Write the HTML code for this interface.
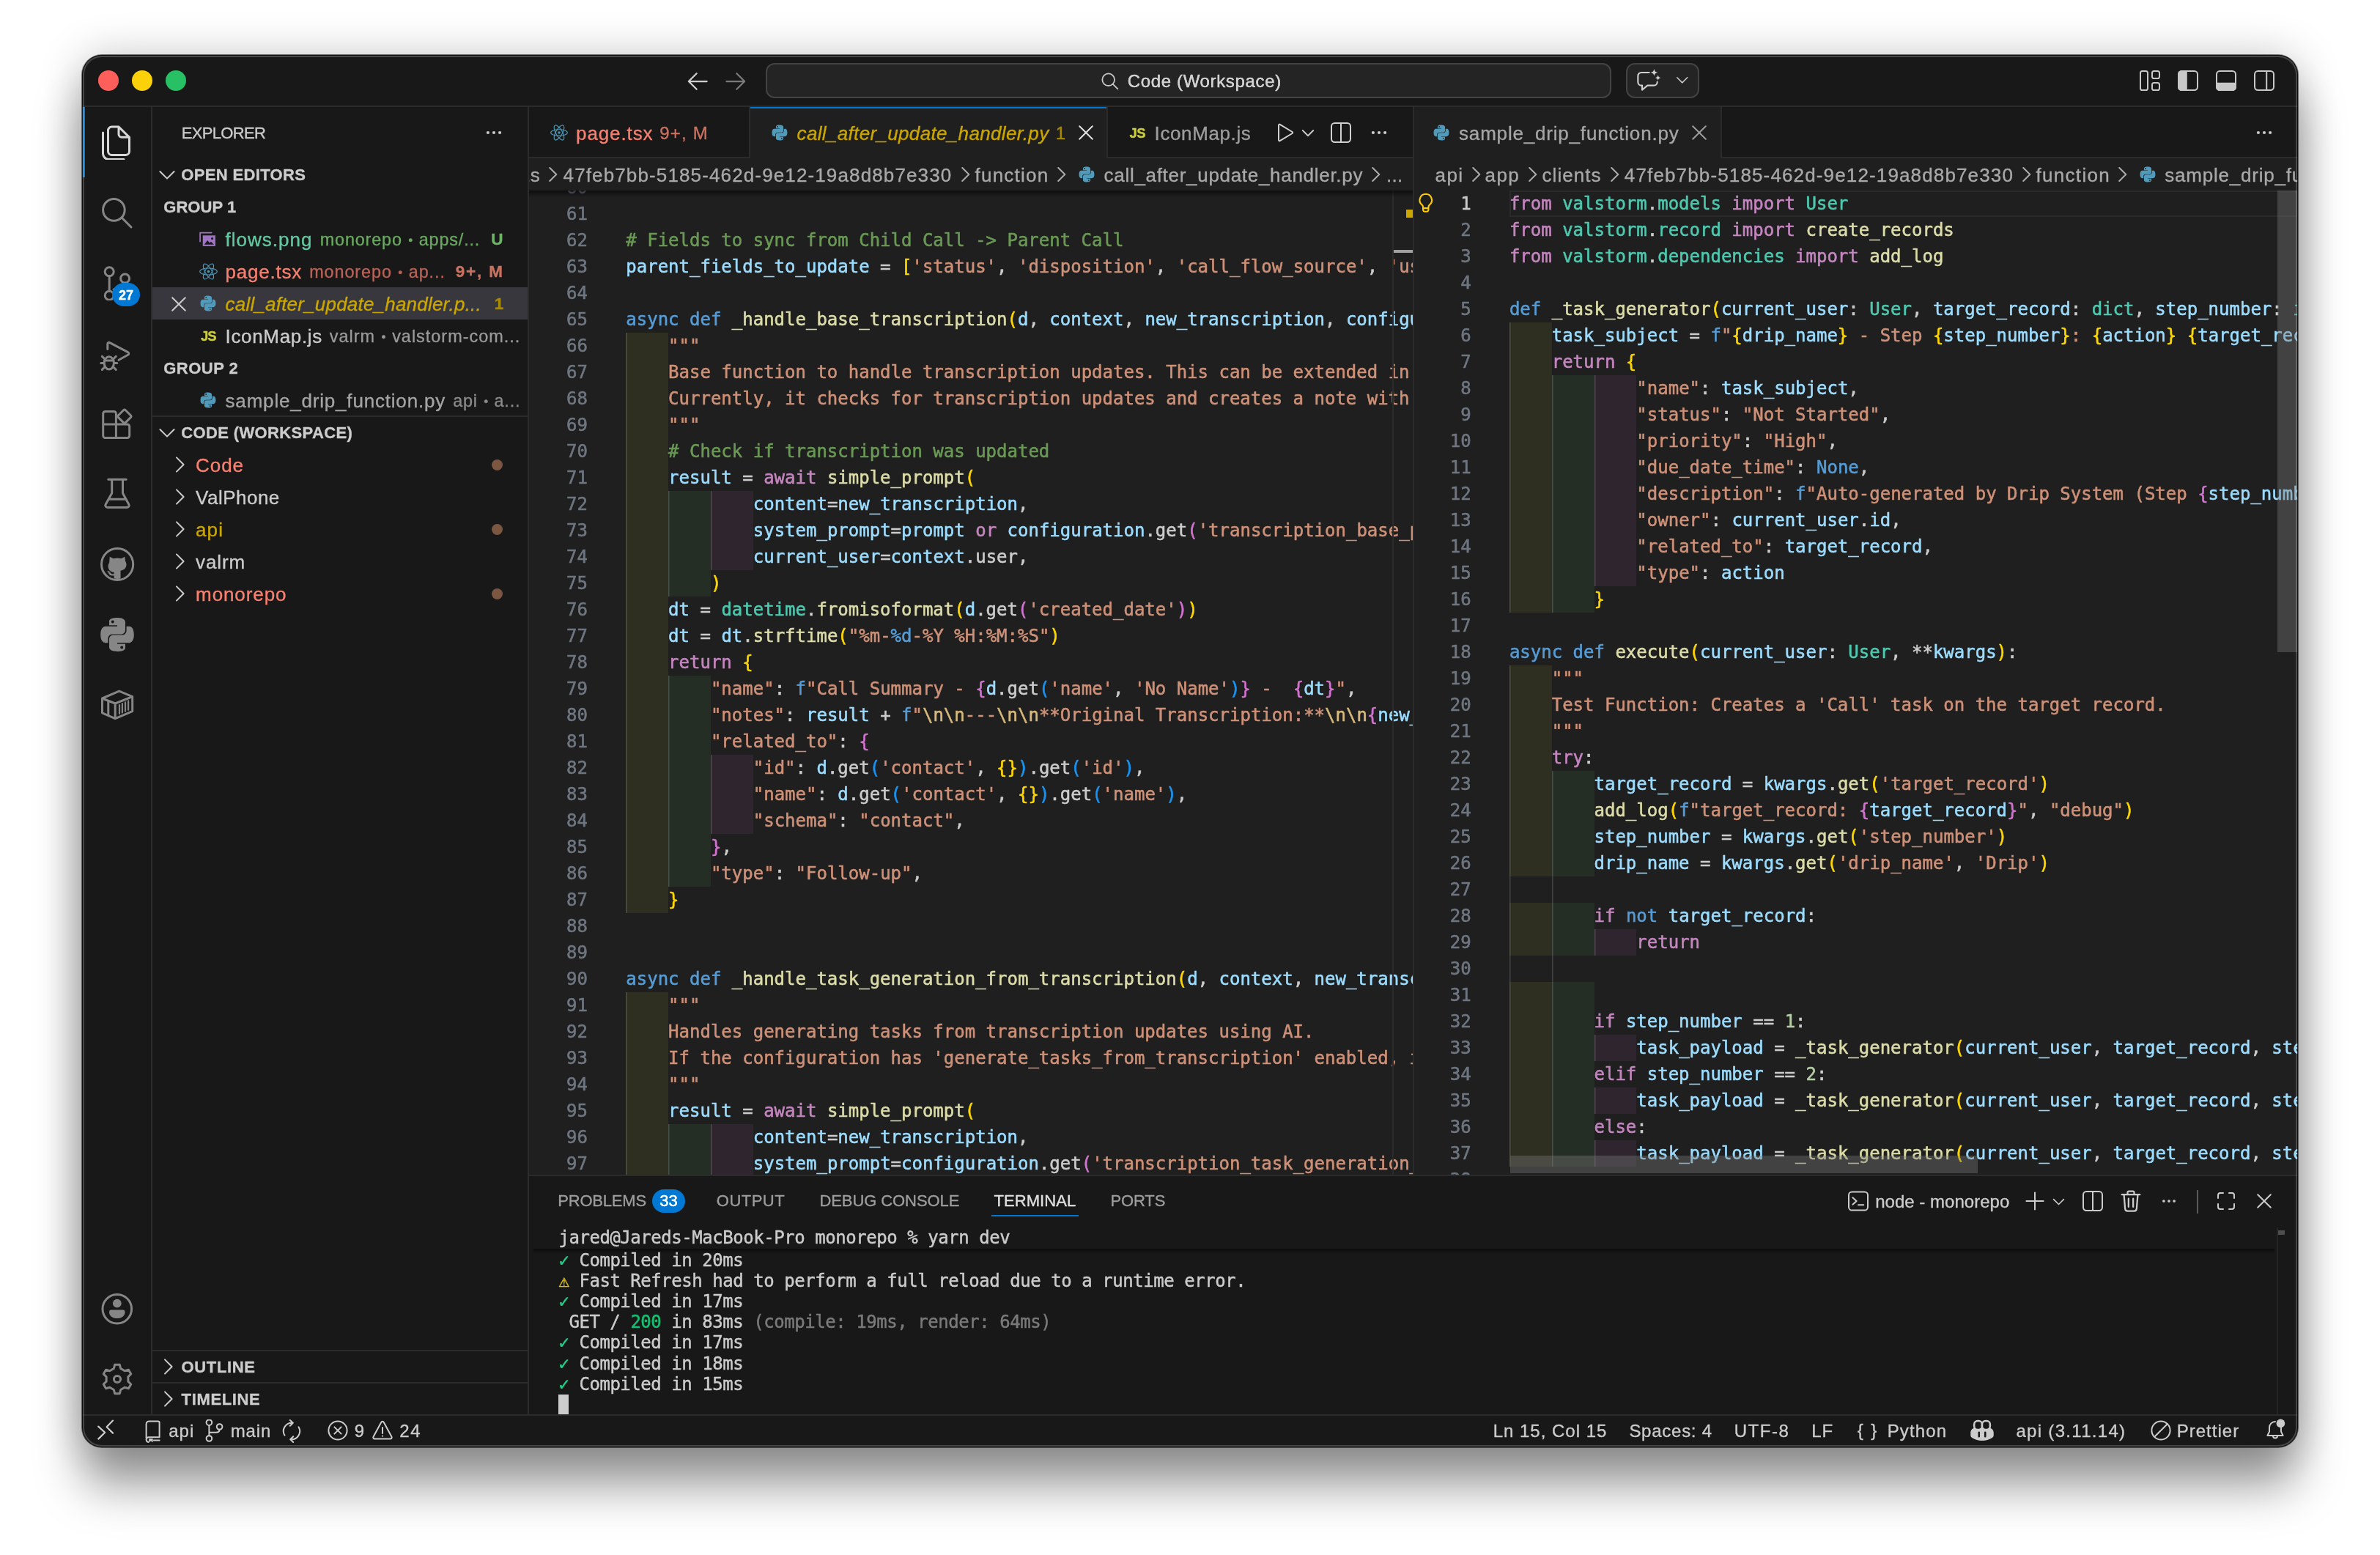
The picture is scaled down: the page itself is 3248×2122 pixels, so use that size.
<!DOCTYPE html>
<html lang="en"><head><meta charset="utf-8"><title>Code (Workspace)</title>
<style>
html,body{margin:0;padding:0}
body{width:3248px;height:2122px;background:#fff;overflow:hidden;position:relative;font-family:"Liberation Sans",sans-serif}
.win{will-change:transform;position:absolute;left:112px;top:75px;width:3024px;height:1900px;border-radius:27px;background:#181818;overflow:hidden;box-shadow:0 0 0 1px rgba(0,0,0,.5),0 2px 60px rgba(0,0,0,.24),0 54px 64px rgba(0,0,0,.38)}
.rim{position:absolute;left:112px;top:75px;width:3024px;height:1900px;border-radius:27px;box-shadow:inset 0 0 0 1px rgba(0,0,0,.8),inset 0 0 0 3px rgba(255,255,255,.2);pointer-events:none}
.a{position:absolute;display:block}
.t{white-space:pre;-webkit-text-stroke:.35px;font-family:"Liberation Sans",sans-serif}
.m{font-family:"DejaVu Sans Mono","Liberation Mono",monospace}
.cl{-webkit-text-stroke:.55px;position:absolute;left:0;height:36px;line-height:36px;font-size:24px;white-space:pre;font-family:"DejaVu Sans Mono","Liberation Mono",monospace;color:#ccc}
.ln{-webkit-text-stroke:.55px;position:absolute;height:36px;line-height:36px;font-size:24px;text-align:right;width:80px;font-family:"DejaVu Sans Mono","Liberation Mono",monospace;color:#6e7681}
.k{color:#569cd6}.c{color:#c586c0}.f{color:#dcdcaa}.v{color:#9cdcfe}.s{color:#ce9178}.cm{color:#6a9955}.ty{color:#4ec9b0}.n{color:#b5cea8}.p{color:#ccc}.b1{color:#ffd700}.b2{color:#d273d0}.b3{color:#1795f6}.e{color:#d7ba7d}
.tl{-webkit-text-stroke:.45px;position:absolute;left:0;height:28px;line-height:28px;font-size:24px;letter-spacing:-.453px;white-space:pre;font-family:"DejaVu Sans Mono","Liberation Mono",monospace;color:#ccc}
.i{display:inline-block;width:57.8125px;height:36px;vertical-align:top;font-style:normal;box-shadow:inset 1.5px 0 0 rgba(255,255,255,.16)}
.i1{background:rgba(255,255,64,.07)}.i2{background:rgba(127,255,127,.07)}.i3{background:rgba(255,127,255,.07)}.i4{background:rgba(79,236,236,.07)}
.bu{font-size:.74em;vertical-align:.13em;margin:0 .06em;letter-spacing:0}
</style></head>
<body>
<div class="win">
<div class="a" style="left:0px;top:69px;width:3024px;height:2px;background:#2b2b2b;"></div>
<div class="a" style="left:22px;top:21px;width:28px;height:28px;background:#ff5f5a;border-radius:50%;"></div>
<div class="a" style="left:68px;top:21px;width:28px;height:28px;background:#fdd10a;border-radius:50%;"></div>
<div class="a" style="left:114px;top:21px;width:28px;height:28px;background:#27c064;border-radius:50%;"></div>
<svg class="a" style="left:821.5px;top:17.5px;width:36px;height:36px;color:#d0d0d0;" viewBox="0 0 16 16" fill="none" stroke="currentColor" stroke-width="1.0" stroke-linecap="round" stroke-linejoin="round"><path d="M13.6 8H2.6M7.4 3.2 2.6 8l4.8 4.8"/></svg>
<svg class="a" style="left:874px;top:17.5px;width:36px;height:36px;color:#7a7a7a;" viewBox="0 0 16 16" fill="none" stroke="currentColor" stroke-width="1.0" stroke-linecap="round" stroke-linejoin="round"><path d="M2.4 8h11M8.6 3.2 13.4 8l-4.8 4.8"/></svg>
<div class="a" style="left:933px;top:11px;width:1154px;height:48px;background:#242424;box-sizing:border-box;border:2px solid #434343;border-radius:12px;"></div>
<svg class="a" style="left:1387.5px;top:20.5px;width:29px;height:29px;color:#c8c8c8;" viewBox="0 0 16 16" fill="none" stroke="currentColor" stroke-width="1" stroke-linecap="round" stroke-linejoin="round"><circle cx="7" cy="7" r="4.6"/><path d="M10.4 10.4 14 14"/></svg>
<span class="a t" style="top:19.3px;line-height:34px;font-size:24px;color:#d2d2d2;letter-spacing:0.66px;left:1426.68px;text-shadow:0 0 .6px #d2d2d2;">Code (Workspace)</span>
<div class="a" style="left:2107px;top:11px;width:100px;height:48px;background:#242424;box-sizing:border-box;border:2px solid #434343;border-radius:12px;"></div>
<svg class="a" style="left:2121px;top:18px;width:34px;height:34px;color:#d0d0d0;" viewBox="0 0 16 16" fill="none" stroke="currentColor" stroke-width="1" stroke-linecap="round" stroke-linejoin="round"><path d="M8.3 2.8H3.3A2.2 2.2 0 0 0 1.1 5v3.9a2.2 2.2 0 0 0 2.2 2.2h.5v2.9l3.4-2.9h4.1a2.2 2.2 0 0 0 2.2-2.2V9"/><path fill="currentColor" stroke="none" d="M11.5.5c.3 1.5.8 2 2.3 2.3-1.5.3-2 .8-2.3 2.3-.3-1.5-.8-2-2.3-2.3 1.5-.3 2-.8 2.3-2.3zM13.95 4.4c.25 1.2.6 1.55 1.8 1.8-1.2.25-1.55.6-1.8 1.8-.25-1.2-.6-1.55-1.8-1.8 1.2-.25 1.55-.6 1.8-1.8z"/></svg>
<svg class="a" style="left:2171.55px;top:21.75px;width:23.5px;height:23.5px;color:#c8c8c8;" viewBox="0 0 16 16" fill="none" stroke="currentColor" stroke-width="1.05" stroke-linecap="round" stroke-linejoin="round"><path d="M3.2 6 8 10.8 12.8 6"/></svg>
<svg class="a" style="left:2806px;top:19px;width:32px;height:32px;color:#c8c8c8;" viewBox="0 0 16 16" fill="none" stroke="currentColor" stroke-width="1" stroke-linecap="round" stroke-linejoin="round"><rect x="1.5" y="1.5" width="5" height="13" rx="1.3"/><rect x="9.5" y="1.5" width="5" height="5" rx="1.3"/><rect x="9.5" y="9.5" width="5" height="5" rx="1.3"/></svg>
<svg class="a" style="left:2858px;top:19px;width:32px;height:32px;color:#c8c8c8;" viewBox="0 0 16 16" fill="none" stroke="currentColor" stroke-width="1" stroke-linecap="round" stroke-linejoin="round"><rect x="1.5" y="1.5" width="13" height="13" rx="2.2"/><path d="M3.7 1.5h3.2v13H3.7a2.2 2.2 0 0 1-2.2-2.2V3.7A2.2 2.2 0 0 1 3.7 1.5z" fill="currentColor"/></svg>
<svg class="a" style="left:2910px;top:19px;width:32px;height:32px;color:#c8c8c8;" viewBox="0 0 16 16" fill="none" stroke="currentColor" stroke-width="1" stroke-linecap="round" stroke-linejoin="round"><rect x="1.5" y="1.5" width="13" height="13" rx="2.2"/><path d="M1.5 9.9h13v2.4a2.2 2.2 0 0 1-2.2 2.2H3.7a2.2 2.2 0 0 1-2.2-2.2z" fill="currentColor"/></svg>
<svg class="a" style="left:2962px;top:19px;width:32px;height:32px;color:#c8c8c8;" viewBox="0 0 16 16" fill="none" stroke="currentColor" stroke-width="1" stroke-linecap="round" stroke-linejoin="round"><rect x="1.5" y="1.5" width="13" height="13" rx="2.2"/><path d="M9.6 1.5v13"/></svg>
<div class="a" style="left:94px;top:71px;width:2px;height:1786px;background:#2b2b2b;"></div>
<div class="a" style="left:0px;top:71px;width:4px;height:96px;background:#0078d4;"></div>
<svg class="a" style="left:24px;top:95px;width:48px;height:48px;color:#d7d7d7;" viewBox="0 0 24 24" fill="none" stroke="currentColor" stroke-width="1.5" stroke-linecap="round" stroke-linejoin="round"><path d="M13 1.5H8.25a2.5 2.5 0 0 0-2.5 2.5v14.25a2.5 2.5 0 0 0 2.5 2.5h9.5a2.5 2.5 0 0 0 2.5-2.5V8.7zM13 1.5V6.6a2 2 0 0 0 2 2h5.25M2.25 5.5V19.75a4 4 0 0 0 4 4H16.5"/></svg>
<svg class="a" style="left:24px;top:191px;width:48px;height:48px;color:#868686;" viewBox="0 0 24 24" fill="none" stroke="currentColor" stroke-width="1.5" stroke-linecap="round" stroke-linejoin="round"><circle cx="9.7" cy="10.2" r="7.4"/><path d="M15.2 15.6 21.5 22"/></svg>
<svg class="a" style="left:24px;top:287px;width:48px;height:48px;color:#868686;" viewBox="0 0 24 24" fill="none" stroke="currentColor" stroke-width="1.5" stroke-linecap="round" stroke-linejoin="round"><circle cx="6.6" cy="4.4" r="3"/><circle cx="17.3" cy="9" r="3"/><circle cx="6.6" cy="20.6" r="3"/><path d="M6.6 7.4V17.6M17.3 12c0 3.5-3 4.2-7.8 4.5"/></svg>
<svg class="a" style="left:24px;top:383px;width:48px;height:48px;color:#868686;" viewBox="0 0 24 24" fill="none" stroke="currentColor" stroke-width="1.5" stroke-linecap="round" stroke-linejoin="round"><path d="M5.4 9.3V5.7a1 1 0 0 1 1.5-.9l12.4 6.5a1 1 0 0 1 0 1.8L13 16.6"/><ellipse cx="6.4" cy="18.7" rx="3.3" ry="4.3"/><path d="M3.1 18.7H.9M9.7 18.7h2.2M3.5 16 1.7 14.2M9.3 16l1.8-1.8M3.5 21.4l-1.8 1.8M9.3 21.4l1.8 1.8M3.3 17h6.2"/></svg>
<svg class="a" style="left:24px;top:479px;width:48px;height:48px;color:#868686;" viewBox="0 0 24 24" fill="none" stroke="currentColor" stroke-width="1.5" stroke-linecap="round" stroke-linejoin="round"><path d="M2.35 5.25a1.5 1.5 0 0 1 1.5-1.5H9.7a1.5 1.5 0 0 1 1.5 1.5v16.5M2.35 5.25v15a1.5 1.5 0 0 0 1.5 1.5h15a1.5 1.5 0 0 0 1.5-1.5v-6.3a1.5 1.5 0 0 0-1.5-1.5H2.35"/><path d="M16.25 2.9a1 1 0 0 1 1.4 0l3.5 3.5a1 1 0 0 1 0 1.4l-3.5 3.5a1 1 0 0 1-1.4 0l-3.5-3.5a1 1 0 0 1 0-1.4z"/></svg>
<svg class="a" style="left:24px;top:575px;width:48px;height:48px;color:#868686;" viewBox="0 0 24 24" fill="none" stroke="currentColor" stroke-width="1.5" stroke-linecap="round" stroke-linejoin="round"><path d="M5.9 2.1h12.2M8.35 2.1v9.4L4.1 19.1a1.4 1.4 0 0 0 1.2 2.1h13.4a1.4 1.4 0 0 0 1.2-2.1L15.75 11.5V2.1M6.5 15.6h11.1"/></svg>
<svg class="a" style="left:24px;top:671px;width:48px;height:48px;color:#868686;" viewBox="0 0 24 24" fill="none" stroke="currentColor" stroke-width="1.5" stroke-linecap="round" stroke-linejoin="round"><circle cx="12.05" cy="12" r="10.8"/><path fill="currentColor" stroke="none" transform="translate(12 13.5) scale(.91) translate(-12 -13.5)" d="M6.4 6.2l2.8 1.4a9.5 9.5 0 0 1 5.7 0l2.8-1.4.35 3.3c.9 1.3 1.050 2.7.550 4.2-.6 1.8-2.1 2.750-4.1 2.9V22.5a11 11 0 0 1-4.950.1v-2.3c-2.3.5-3.5-.5-4.050-1.9-.3-.8-.65-1.2-1.150-1.5 1.150-.3 1.9.4 2.350 1.2.6 1 1.6 1.350 2.850.95v-1.2c-2-.150-3.5-1.1-4.1-2.9-.5-1.5-.35-2.9.55-4.2z"/></svg>
<svg class="a" style="left:24px;top:767px;width:48px;height:48px;color:#868686;" viewBox="0 0 24 24" fill="none" stroke="currentColor" stroke-width="1.5" stroke-linecap="round" stroke-linejoin="round"><g fill="currentColor" stroke="none" fill-rule="evenodd"><path d="M11.9.5c-5.8 0-5.4 2.5-5.4 2.5v2.6h5.5v.8H4.3S.6 6 .6 11.9s3.2 5.7 3.2 5.7h1.9v-2.7s-.1-3.2 3.2-3.2h5.5s3.1.05 3.1-3V3.7S18 .5 11.9.5zM8.9 2.2a1 1 0 1 1 0 2 1 1 0 0 1 0-2z"/><path d="M12.1 23.5c5.8 0 5.4-2.5 5.4-2.5v-2.6H12v-.8h7.7s3.7.4 3.7-5.5-3.2-5.7-3.2-5.7h-1.9v2.7s.1 3.2-3.2 3.2H9.6s-3.1-.05-3.1 3v5s-.5 3.2 5.6 3.2zM15.1 21.8a1 1 0 1 1 0-2 1 1 0 0 1 0 2z"/></g></svg>
<svg class="a" style="left:24px;top:863px;width:48px;height:48px;color:#868686;" viewBox="0 0 24 24" fill="none" stroke="currentColor" stroke-width="1.5" stroke-linecap="round" stroke-linejoin="round"><path d="M13.3 2.6 1.75 7.5v9.9l8.85 3.9 11.75-4.95V6.3zM1.75 7.5l8.85 3.5 11.75-4.7M10.6 11v10.3M5.9 9.3v9.6"/><path stroke-width="1.1" d="M13.5 12.1v5.9M15.45 11v6.2M17.5 10.2v6.15M19.55 9.2v6.15"/></svg>
<div class="a" style="left:41px;top:311px;width:38px;height:32px;background:#0078d4;border-radius:16px;"></div>
<span class="a t" style="top:313.8px;line-height:28px;font-size:18px;color:#fff;font-weight:700;left:41px;width:38px;text-align:center;">27</span>
<svg class="a" style="left:24px;top:1688px;width:48px;height:48px;color:#868686;" viewBox="0 0 24 24" fill="none" stroke="currentColor" stroke-width="1.5" stroke-linecap="round" stroke-linejoin="round"><circle cx="11.9" cy="11.6" r="9.9"/><g fill="currentColor" stroke="none"><circle cx="11.9" cy="7.8" r="2.95"/><path d="M6.5 13.7a1.5 1.5 0 0 1 1.5-1.5h7.8a1.5 1.5 0 0 1 1.5 1.5c0 2.6-2.3 4.3-5.4 4.3s-5.4-1.7-5.4-4.3z"/></g></svg>
<svg class="a" style="left:24px;top:1783px;width:48px;height:48px;color:#868686;" viewBox="0 0 24 24" fill="none" stroke="currentColor" stroke-width="1.5" stroke-linecap="round" stroke-linejoin="round"><path d="M9.65 4.77 10.33 2.14 13.67 2.14 14.35 4.77 17.09 6.35 19.71 5.63 21.37 8.51 19.43 10.42 19.43 13.58 21.37 15.49 19.71 18.37 17.09 17.65 14.35 19.23 13.67 21.86 10.33 21.86 9.65 19.23 6.91 17.65 4.29 18.37 2.63 15.49 4.57 13.58 4.57 10.42 2.63 8.51 4.29 5.63 6.91 6.35z"/><circle cx="12" cy="12" r="2.3"/></svg>
<div class="a" style="left:608px;top:71px;width:2px;height:1786px;background:#2b2b2b;"></div>
<span class="a t" style="top:90.8px;line-height:32px;font-size:22px;color:#cccccc;letter-spacing:-0.68px;left:135.79px;">EXPLORER</span>
<svg class="a" style="left:546px;top:90px;width:32px;height:32px;color:#cccccc;" viewBox="0 0 16 16" fill="none" stroke="currentColor" stroke-width="1" stroke-linecap="round" stroke-linejoin="round"><g fill="currentColor" stroke="none"><circle cx="3.95" cy="8" r="1.05"/><circle cx="8" cy="8" r="1.05"/><circle cx="12.05" cy="8" r="1.05"/></g></svg>
<svg class="a" style="left:100px;top:147px;width:32px;height:32px;color:#cccccc;" viewBox="0 0 16 16" fill="none" stroke="currentColor" stroke-width="1" stroke-linecap="round" stroke-linejoin="round"><path d="M3.2 6 8 10.8 12.8 6"/></svg>
<span class="a t" style="top:147.8px;line-height:32px;font-size:22px;color:#cccccc;font-weight:700;letter-spacing:0.34px;left:135.29px;">OPEN EDITORS</span>
<span class="a t" style="top:191.8px;line-height:32px;font-size:22px;color:#cccccc;font-weight:700;letter-spacing:0.04px;left:111.29px;">GROUP 1</span>
<svg class="a" style="left:159px;top:238.5px;width:25px;height:25px;color:#a074c4;" viewBox="0 0 24 24" fill="none" stroke="currentColor" stroke-width="1.6" stroke-linecap="round" stroke-linejoin="round"><path d="M2 15V3.5h15" stroke-width="1.6" fill="none"/><rect x="5.5" y="7" width="16.5" height="14" fill="currentColor" stroke="none"/><path d="M7.5 19l4.2-5.5 2.8 3.2 1.8-1.7 3.7 4z" fill="#181818" stroke="none"/><circle cx="17.8" cy="11" r="1.5" fill="#181818" stroke="none"/></svg>
<span class="a t" style="top:233.8px;line-height:36px;font-size:26px;color:#62c8a0;letter-spacing:1px;left:195.57px;">flows.png</span>
<span class="a t" style="top:236.1px;line-height:33px;font-size:23.4px;color:#6aa861;letter-spacing:0.85px;left:324.71px;">monorepo <span class="bu">•</span> apps/...</span>
<span class="a t" style="top:236.05px;line-height:32px;font-size:22.5px;color:#70b467;font-weight:700;left:558.26px;">U</span>
<svg class="a" style="left:158.5px;top:281.5px;width:27px;height:27px;color:#519aba;" viewBox="0 0 24 24" fill="none" stroke="currentColor" stroke-width="1" stroke-linecap="round" stroke-linejoin="round"><g stroke-width="1" fill="none"><ellipse cx="12" cy="12" rx="10.5" ry="4"/><ellipse cx="12" cy="12" rx="10.5" ry="4" transform="rotate(60 12 12)"/><ellipse cx="12" cy="12" rx="10.5" ry="4" transform="rotate(120 12 12)"/></g><circle cx="12" cy="12" r="1.6" fill="currentColor" stroke="none"/></svg>
<span class="a t" style="top:277.8px;line-height:36px;font-size:26px;color:#f88070;letter-spacing:0.76px;left:195.57px;">page.tsx</span>
<span class="a t" style="top:280.1px;line-height:33px;font-size:23.4px;color:#b96357;letter-spacing:0.91px;left:310.21px;">monorepo <span class="bu">•</span> ap...</span>
<span class="a t" style="top:280.05px;line-height:32px;font-size:22.5px;color:#c9705f;font-weight:700;letter-spacing:1.81px;left:509.76px;">9+, M</span>
<div class="a" style="left:96px;top:317px;width:512px;height:44px;background:#37373d;"></div>
<svg class="a" style="left:116px;top:323.5px;width:32px;height:32px;color:#cccccc;" viewBox="0 0 16 16" fill="none" stroke="currentColor" stroke-width="1" stroke-linecap="round" stroke-linejoin="round"><path d="M3.6 3.6l8.8 8.8M12.4 3.6l-8.8 8.8"/></svg>
<svg class="a" style="left:161px;top:328px;width:22px;height:22px;color:#ccc;" viewBox="0 0 24 24" fill="none" stroke="currentColor" stroke-width="1" stroke-linecap="round" stroke-linejoin="round"><g fill="#519aba" stroke="none" fill-rule="evenodd"><path d="M11.9.5c-5.8 0-5.4 2.5-5.4 2.5v2.6h5.5v.8H4.3S.6 6 .6 11.9s3.2 5.7 3.2 5.7h1.9v-2.7s-.1-3.2 3.2-3.2h5.5s3.1.05 3.1-3V3.7S18 .5 11.9.5zM8.9 2.2a1 1 0 1 1 0 2 1 1 0 0 1 0-2z"/><path d="M12.1 23.5c5.8 0 5.4-2.5 5.4-2.5v-2.6H12v-.8h7.7s3.7.4 3.7-5.5-3.2-5.7-3.2-5.7h-1.9v2.7s.1 3.2-3.2 3.2H9.6s-3.1-.05-3.1 3v5s-.5 3.2 5.6 3.2zM15.1 21.8a1 1 0 1 1 0-2 1 1 0 0 1 0 2z"/></g></svg>
<span class="a t" style="top:321.8px;line-height:36px;font-size:26px;color:#cca700;font-style:italic;letter-spacing:0.21px;left:195.57px;">call_after_update_handler.p...</span>
<span class="a t" style="top:324.05px;line-height:32px;font-size:22.5px;color:#a88a00;font-weight:700;left:562.76px;">1</span>
<span class="a t" style="top:369.55px;line-height:28px;font-size:18.5px;color:#cbcb41;font-weight:700;letter-spacing:-1.05px;left:161.98px;">JS</span>
<span class="a t" style="top:365.8px;line-height:36px;font-size:26px;color:#cccccc;letter-spacing:0.66px;left:195.57px;">IconMap.js</span>
<span class="a t" style="top:368.1px;line-height:33px;font-size:23.4px;color:#9a9a9a;letter-spacing:1.02px;left:337.71px;">valrm <span class="bu">•</span> valstorm-com...</span>
<span class="a t" style="top:411.8px;line-height:32px;font-size:22px;color:#cccccc;font-weight:700;letter-spacing:0.47px;left:111.29px;">GROUP 2</span>
<svg class="a" style="left:161px;top:460px;width:22px;height:22px;color:#ccc;" viewBox="0 0 24 24" fill="none" stroke="currentColor" stroke-width="1" stroke-linecap="round" stroke-linejoin="round"><g fill="#519aba" stroke="none" fill-rule="evenodd"><path d="M11.9.5c-5.8 0-5.4 2.5-5.4 2.5v2.6h5.5v.8H4.3S.6 6 .6 11.9s3.2 5.7 3.2 5.7h1.9v-2.7s-.1-3.2 3.2-3.2h5.5s3.1.05 3.1-3V3.7S18 .5 11.9.5zM8.9 2.2a1 1 0 1 1 0 2 1 1 0 0 1 0-2z"/><path d="M12.1 23.5c5.8 0 5.4-2.5 5.4-2.5v-2.6H12v-.8h7.7s3.7.4 3.7-5.5-3.2-5.7-3.2-5.7h-1.9v2.7s.1 3.2-3.2 3.2H9.6s-3.1-.05-3.1 3v5s-.5 3.2 5.6 3.2zM15.1 21.8a1 1 0 1 1 0-2 1 1 0 0 1 0 2z"/></g></svg>
<span class="a t" style="top:453.8px;line-height:36px;font-size:26px;color:#a4a4a4;letter-spacing:0.81px;left:195.57px;">sample_drip_function.py</span>
<span class="a t" style="top:456.1px;line-height:33px;font-size:23.4px;color:#8a8a8a;letter-spacing:0.8px;left:506.21px;">api <span class="bu">•</span> a...</span>
<div class="a" style="left:96px;top:492px;width:512px;height:2px;background:#2b2b2b;"></div>
<svg class="a" style="left:100px;top:499px;width:32px;height:32px;color:#cccccc;" viewBox="0 0 16 16" fill="none" stroke="currentColor" stroke-width="1" stroke-linecap="round" stroke-linejoin="round"><path d="M3.2 6 8 10.8 12.8 6"/></svg>
<span class="a t" style="top:499.8px;line-height:32px;font-size:22px;color:#cccccc;font-weight:700;letter-spacing:0.36px;left:135.29px;">CODE (WORKSPACE)</span>
<svg class="a" style="left:117px;top:543px;width:32px;height:32px;color:#cccccc;" viewBox="0 0 16 16" fill="none" stroke="currentColor" stroke-width="1" stroke-linecap="round" stroke-linejoin="round"><path d="M6 3.2 10.8 8 6 12.8"/></svg>
<span class="a t" style="top:541.8px;line-height:36px;font-size:26px;color:#f88070;letter-spacing:0.95px;left:155.07px;">Code</span>
<div class="a" style="left:559px;top:551.5px;width:15px;height:15px;background:#7b5641;border-radius:50%;"></div>
<svg class="a" style="left:117px;top:587px;width:32px;height:32px;color:#cccccc;" viewBox="0 0 16 16" fill="none" stroke="currentColor" stroke-width="1" stroke-linecap="round" stroke-linejoin="round"><path d="M6 3.2 10.8 8 6 12.8"/></svg>
<span class="a t" style="top:585.8px;line-height:36px;font-size:26px;color:#cccccc;letter-spacing:0.49px;left:155.07px;">ValPhone</span>
<svg class="a" style="left:117px;top:631px;width:32px;height:32px;color:#cccccc;" viewBox="0 0 16 16" fill="none" stroke="currentColor" stroke-width="1" stroke-linecap="round" stroke-linejoin="round"><path d="M6 3.2 10.8 8 6 12.8"/></svg>
<span class="a t" style="top:629.8px;line-height:36px;font-size:26px;color:#cca700;letter-spacing:1.09px;left:155.07px;">api</span>
<div class="a" style="left:559px;top:639.5px;width:15px;height:15px;background:#7b5641;border-radius:50%;"></div>
<svg class="a" style="left:117px;top:675px;width:32px;height:32px;color:#cccccc;" viewBox="0 0 16 16" fill="none" stroke="currentColor" stroke-width="1" stroke-linecap="round" stroke-linejoin="round"><path d="M6 3.2 10.8 8 6 12.8"/></svg>
<span class="a t" style="top:673.8px;line-height:36px;font-size:26px;color:#cccccc;letter-spacing:0.9px;left:155.07px;">valrm</span>
<svg class="a" style="left:117px;top:719px;width:32px;height:32px;color:#cccccc;" viewBox="0 0 16 16" fill="none" stroke="currentColor" stroke-width="1" stroke-linecap="round" stroke-linejoin="round"><path d="M6 3.2 10.8 8 6 12.8"/></svg>
<span class="a t" style="top:717.8px;line-height:36px;font-size:26px;color:#f88070;letter-spacing:0.91px;left:155.07px;">monorepo</span>
<div class="a" style="left:559px;top:727.5px;width:15px;height:15px;background:#7b5641;border-radius:50%;"></div>
<div class="a" style="left:96px;top:1767px;width:512px;height:2px;background:#2b2b2b;"></div>
<svg class="a" style="left:101px;top:1774px;width:32px;height:32px;color:#cccccc;" viewBox="0 0 16 16" fill="none" stroke="currentColor" stroke-width="1" stroke-linecap="round" stroke-linejoin="round"><path d="M6 3.2 10.8 8 6 12.8"/></svg>
<span class="a t" style="top:1774.8px;line-height:32px;font-size:22px;color:#cccccc;font-weight:700;letter-spacing:0.62px;left:135.59px;">OUTLINE</span>
<div class="a" style="left:96px;top:1811px;width:512px;height:2px;background:#2b2b2b;"></div>
<svg class="a" style="left:101px;top:1818px;width:32px;height:32px;color:#cccccc;" viewBox="0 0 16 16" fill="none" stroke="currentColor" stroke-width="1" stroke-linecap="round" stroke-linejoin="round"><path d="M6 3.2 10.8 8 6 12.8"/></svg>
<span class="a t" style="top:1818.8px;line-height:32px;font-size:22px;color:#cccccc;font-weight:700;letter-spacing:0.64px;left:135.59px;">TIMELINE</span>
<div class="a" style="left:610px;top:141px;width:1206px;height:1387px;background:#1f1f1f;"></div>
<div class="a" style="left:1818px;top:141px;width:1206px;height:1387px;background:#1f1f1f;"></div>
<div class="a" style="left:1816px;top:71px;width:2px;height:1457px;background:#2b2b2b;"></div>
<div class="a" style="left:610px;top:139px;width:1206px;height:2px;background:#2b2b2b;"></div>
<div class="a" style="left:1818px;top:139px;width:1206px;height:2px;background:#2b2b2b;"></div>
<div class="a" style="left:910px;top:71px;width:2px;height:68px;background:#2b2b2b;"></div>
<svg class="a" style="left:637.5px;top:93px;width:26px;height:26px;color:#519aba;" viewBox="0 0 24 24" fill="none" stroke="currentColor" stroke-width="1" stroke-linecap="round" stroke-linejoin="round"><g stroke-width="1" fill="none"><ellipse cx="12" cy="12" rx="10.5" ry="4"/><ellipse cx="12" cy="12" rx="10.5" ry="4" transform="rotate(60 12 12)"/><ellipse cx="12" cy="12" rx="10.5" ry="4" transform="rotate(120 12 12)"/></g><circle cx="12" cy="12" r="1.6" fill="currentColor" stroke="none"/></svg>
<span class="a t" style="top:88.8px;line-height:36px;font-size:26px;color:#f88070;letter-spacing:0.88px;left:674.07px;">page.tsx</span>
<span class="a t" style="top:90.1px;line-height:34px;font-size:24px;color:#cc7160;letter-spacing:1.19px;left:788.18px;">9+, M</span>
<div class="a" style="left:912px;top:71px;width:486px;height:70px;background:#1f1f1f;"></div>
<div class="a" style="left:912px;top:71px;width:486px;height:2px;background:#0078d4;"></div>
<div class="a" style="left:1398px;top:71px;width:2px;height:68px;background:#2b2b2b;"></div>
<svg class="a" style="left:940.7px;top:94.5px;width:22px;height:22px;color:#ccc;" viewBox="0 0 24 24" fill="none" stroke="currentColor" stroke-width="1" stroke-linecap="round" stroke-linejoin="round"><g fill="#519aba" stroke="none" fill-rule="evenodd"><path d="M11.9.5c-5.8 0-5.4 2.5-5.4 2.5v2.6h5.5v.8H4.3S.6 6 .6 11.9s3.2 5.7 3.2 5.7h1.9v-2.7s-.1-3.2 3.2-3.2h5.5s3.1.05 3.1-3V3.7S18 .5 11.9.5zM8.9 2.2a1 1 0 1 1 0 2 1 1 0 0 1 0-2z"/><path d="M12.1 23.5c5.8 0 5.4-2.5 5.4-2.5v-2.6H12v-.8h7.7s3.7.4 3.7-5.5-3.2-5.7-3.2-5.7h-1.9v2.7s.1 3.2-3.2 3.2H9.6s-3.1-.05-3.1 3v5s-.5 3.2 5.6 3.2zM15.1 21.8a1 1 0 1 1 0-2 1 1 0 0 1 0 2z"/></g></svg>
<span class="a t" style="top:88.8px;line-height:36px;font-size:26px;color:#cca700;font-style:italic;letter-spacing:0.34px;left:975.57px;">call_after_update_handler.py</span>
<span class="a t" style="top:90.1px;line-height:34px;font-size:24px;color:#a88a00;left:1328.68px;">1</span>
<svg class="a" style="left:1354px;top:90px;width:32px;height:32px;color:#e0e0e0;" viewBox="0 0 16 16" fill="none" stroke="currentColor" stroke-width="1" stroke-linecap="round" stroke-linejoin="round"><path d="M3.6 3.6l8.8 8.8M12.4 3.6l-8.8 8.8"/></svg>
<span class="a t" style="top:92.55px;line-height:28px;font-size:18.5px;color:#cbcb41;font-weight:700;letter-spacing:-0.55px;left:1429.48px;">JS</span>
<span class="a t" style="top:88.8px;line-height:36px;font-size:26px;color:#9d9d9d;letter-spacing:0.61px;left:1463.57px;">IconMap.js</span>
<svg class="a" style="left:1625px;top:90px;width:32px;height:32px;color:#d0d0d0;" viewBox="0 0 16 16" fill="none" stroke="currentColor" stroke-width="1" stroke-linecap="round" stroke-linejoin="round"><path d="M4 2.9v10.2a.6.6 0 0 0 .9.5l8.4-5.1a.6.6 0 0 0 0-1L4.9 2.4a.6.6 0 0 0-.9.5z"/></svg>
<svg class="a" style="left:1660.5px;top:94px;width:24px;height:24px;color:#c8c8c8;" viewBox="0 0 16 16" fill="none" stroke="currentColor" stroke-width="1.3" stroke-linecap="round" stroke-linejoin="round"><path d="M3.2 6 8 10.8 12.8 6"/></svg>
<svg class="a" style="left:1702px;top:90px;width:32px;height:32px;color:#d0d0d0;" viewBox="0 0 16 16" fill="none" stroke="currentColor" stroke-width="1" stroke-linecap="round" stroke-linejoin="round"><rect x="1.5" y="1.5" width="13" height="13" rx="2.2"/><path d="M8 1.5v13"/></svg>
<svg class="a" style="left:1754px;top:90px;width:32px;height:32px;color:#d0d0d0;" viewBox="0 0 16 16" fill="none" stroke="currentColor" stroke-width="1" stroke-linecap="round" stroke-linejoin="round"><g fill="currentColor" stroke="none"><circle cx="3.95" cy="8" r="1.05"/><circle cx="8" cy="8" r="1.05"/><circle cx="12.05" cy="8" r="1.05"/></g></svg>
<div class="a" style="left:1818px;top:71px;width:418px;height:70px;background:#1f1f1f;"></div>
<div class="a" style="left:2236px;top:71px;width:2px;height:68px;background:#2b2b2b;"></div>
<svg class="a" style="left:1844px;top:95px;width:22px;height:22px;color:#ccc;" viewBox="0 0 24 24" fill="none" stroke="currentColor" stroke-width="1" stroke-linecap="round" stroke-linejoin="round"><g fill="#519aba" stroke="none" fill-rule="evenodd"><path d="M11.9.5c-5.8 0-5.4 2.5-5.4 2.5v2.6h5.5v.8H4.3S.6 6 .6 11.9s3.2 5.7 3.2 5.7h1.9v-2.7s-.1-3.2 3.2-3.2h5.5s3.1.05 3.1-3V3.7S18 .5 11.9.5zM8.9 2.2a1 1 0 1 1 0 2 1 1 0 0 1 0-2z"/><path d="M12.1 23.5c5.8 0 5.4-2.5 5.4-2.5v-2.6H12v-.8h7.7s3.7.4 3.7-5.5-3.2-5.7-3.2-5.7h-1.9v2.7s.1 3.2-3.2 3.2H9.6s-3.1-.05-3.1 3v5s-.5 3.2 5.6 3.2zM15.1 21.8a1 1 0 1 1 0-2 1 1 0 0 1 0 2z"/></g></svg>
<span class="a t" style="top:88.8px;line-height:36px;font-size:26px;color:#a6a6a6;letter-spacing:0.81px;left:1879.07px;">sample_drip_function.py</span>
<svg class="a" style="left:2191px;top:90px;width:32px;height:32px;color:#9d9d9d;" viewBox="0 0 16 16" fill="none" stroke="currentColor" stroke-width="1" stroke-linecap="round" stroke-linejoin="round"><path d="M3.6 3.6l8.8 8.8M12.4 3.6l-8.8 8.8"/></svg>
<svg class="a" style="left:2962px;top:90px;width:32px;height:32px;color:#cccccc;" viewBox="0 0 16 16" fill="none" stroke="currentColor" stroke-width="1" stroke-linecap="round" stroke-linejoin="round"><g fill="currentColor" stroke="none"><circle cx="3.95" cy="8" r="1.05"/><circle cx="8" cy="8" r="1.05"/><circle cx="12.05" cy="8" r="1.05"/></g></svg>
<div class="a" style="left:610px;top:141px;width:1206px;height:44px;overflow:hidden">
<span class="a t" style="top:4.8px;line-height:36px;font-size:26px;color:#a9a9a9;letter-spacing:1.56px;left:-6.93px;">ts</span>
<svg class="a" style="left:17px;top:7px;width:30px;height:30px;color:#a9a9a9;" viewBox="0 0 16 16" fill="none" stroke="currentColor" stroke-width="1.1" stroke-linecap="round" stroke-linejoin="round"><path d="M6 3.2 10.8 8 6 12.8"/></svg>
<span class="a t" style="top:4.8px;line-height:36px;font-size:26px;color:#a9a9a9;letter-spacing:1.13px;left:46.57px;">47feb7bb-5185-462d-9e12-19a8d8b7e330</span>
<svg class="a" style="left:580px;top:7px;width:30px;height:30px;color:#a9a9a9;" viewBox="0 0 16 16" fill="none" stroke="currentColor" stroke-width="1.1" stroke-linecap="round" stroke-linejoin="round"><path d="M6 3.2 10.8 8 6 12.8"/></svg>
<span class="a t" style="top:4.8px;line-height:36px;font-size:26px;color:#a9a9a9;letter-spacing:1.22px;left:608.57px;">function</span>
<svg class="a" style="left:711px;top:7px;width:30px;height:30px;color:#a9a9a9;" viewBox="0 0 16 16" fill="none" stroke="currentColor" stroke-width="1.1" stroke-linecap="round" stroke-linejoin="round"><path d="M6 3.2 10.8 8 6 12.8"/></svg>
<svg class="a" style="left:749.5px;top:11px;width:22px;height:22px;color:#ccc;" viewBox="0 0 24 24" fill="none" stroke="currentColor" stroke-width="1" stroke-linecap="round" stroke-linejoin="round"><g fill="#519aba" stroke="none" fill-rule="evenodd"><path d="M11.9.5c-5.8 0-5.4 2.5-5.4 2.5v2.6h5.5v.8H4.3S.6 6 .6 11.9s3.2 5.7 3.2 5.7h1.9v-2.7s-.1-3.2 3.2-3.2h5.5s3.1.05 3.1-3V3.7S18 .5 11.9.5zM8.9 2.2a1 1 0 1 1 0 2 1 1 0 0 1 0-2z"/><path d="M12.1 23.5c5.8 0 5.4-2.5 5.4-2.5v-2.6H12v-.8h7.7s3.7.4 3.7-5.5-3.2-5.7-3.2-5.7h-1.9v2.7s.1 3.2-3.2 3.2H9.6s-3.1-.05-3.1 3v5s-.5 3.2 5.6 3.2zM15.1 21.8a1 1 0 1 1 0-2 1 1 0 0 1 0 2z"/></g></svg>
<span class="a t" style="top:4.8px;line-height:36px;font-size:26px;color:#a9a9a9;letter-spacing:0.7px;left:784.57px;">call_after_update_handler.py</span>
<svg class="a" style="left:1139.5px;top:7px;width:30px;height:30px;color:#a9a9a9;" viewBox="0 0 16 16" fill="none" stroke="currentColor" stroke-width="1.1" stroke-linecap="round" stroke-linejoin="round"><path d="M6 3.2 10.8 8 6 12.8"/></svg>
<span class="a t" style="top:4.8px;line-height:36px;font-size:26px;color:#a9a9a9;letter-spacing:0.23px;left:1170.07px;">...</span>
</div>
<div class="a" style="left:1818px;top:141px;width:1206px;height:44px;overflow:hidden">
<span class="a t" style="top:4.8px;line-height:36px;font-size:26px;color:#a9a9a9;letter-spacing:1.39px;left:28.57px;">api</span>
<svg class="a" style="left:68.8px;top:7px;width:30px;height:30px;color:#a9a9a9;" viewBox="0 0 16 16" fill="none" stroke="currentColor" stroke-width="1.1" stroke-linecap="round" stroke-linejoin="round"><path d="M6 3.2 10.8 8 6 12.8"/></svg>
<span class="a t" style="top:4.8px;line-height:36px;font-size:26px;color:#a9a9a9;letter-spacing:1.39px;left:96.57px;">app</span>
<svg class="a" style="left:146px;top:7px;width:30px;height:30px;color:#a9a9a9;" viewBox="0 0 16 16" fill="none" stroke="currentColor" stroke-width="1.1" stroke-linecap="round" stroke-linejoin="round"><path d="M6 3.2 10.8 8 6 12.8"/></svg>
<span class="a t" style="top:4.8px;line-height:36px;font-size:26px;color:#a9a9a9;letter-spacing:1.02px;left:174.57px;">clients</span>
<svg class="a" style="left:258px;top:7px;width:30px;height:30px;color:#a9a9a9;" viewBox="0 0 16 16" fill="none" stroke="currentColor" stroke-width="1.1" stroke-linecap="round" stroke-linejoin="round"><path d="M6 3.2 10.8 8 6 12.8"/></svg>
<span class="a t" style="top:4.8px;line-height:36px;font-size:26px;color:#a9a9a9;letter-spacing:1.14px;left:286.87px;">47feb7bb-5185-462d-9e12-19a8d8b7e330</span>
<svg class="a" style="left:819.5px;top:7px;width:30px;height:30px;color:#a9a9a9;" viewBox="0 0 16 16" fill="none" stroke="currentColor" stroke-width="1.1" stroke-linecap="round" stroke-linejoin="round"><path d="M6 3.2 10.8 8 6 12.8"/></svg>
<span class="a t" style="top:4.8px;line-height:36px;font-size:26px;color:#a9a9a9;letter-spacing:1.29px;left:848.57px;">function</span>
<svg class="a" style="left:951px;top:7px;width:30px;height:30px;color:#a9a9a9;" viewBox="0 0 16 16" fill="none" stroke="currentColor" stroke-width="1.1" stroke-linecap="round" stroke-linejoin="round"><path d="M6 3.2 10.8 8 6 12.8"/></svg>
<svg class="a" style="left:990px;top:11px;width:22px;height:22px;color:#ccc;" viewBox="0 0 24 24" fill="none" stroke="currentColor" stroke-width="1" stroke-linecap="round" stroke-linejoin="round"><g fill="#519aba" stroke="none" fill-rule="evenodd"><path d="M11.9.5c-5.8 0-5.4 2.5-5.4 2.5v2.6h5.5v.8H4.3S.6 6 .6 11.9s3.2 5.7 3.2 5.7h1.9v-2.7s-.1-3.2 3.2-3.2h5.5s3.1.05 3.1-3V3.7S18 .5 11.9.5zM8.9 2.2a1 1 0 1 1 0 2 1 1 0 0 1 0-2z"/><path d="M12.1 23.5c5.8 0 5.4-2.5 5.4-2.5v-2.6H12v-.8h7.7s3.7.4 3.7-5.5-3.2-5.7-3.2-5.7h-1.9v2.7s.1 3.2-3.2 3.2H9.6s-3.1-.05-3.1 3v5s-.5 3.2 5.6 3.2zM15.1 21.8a1 1 0 1 1 0-2 1 1 0 0 1 0 2z"/></g></svg>
<span class="a t" style="top:4.8px;line-height:36px;font-size:26px;color:#a9a9a9;letter-spacing:0.8px;left:1024.17px;">sample_drip_function.py</span>
</div>
<div class="a" style="left:610px;top:185px;width:1206px;height:1343px;overflow:hidden">
<div class="ln" style="top:-22px;left:0px">60</div>
<div class="ln" style="top:14px;left:0px">61</div>
<div class="ln" style="top:50px;left:0px">62</div>
<div class="cl" style="top:50px;left:132.3px"><span class="cm"># Fields to sync from Child Call -&gt; Parent Call</span></div>
<div class="ln" style="top:86px;left:0px">63</div>
<div class="cl" style="top:86px;left:132.3px"><span class="v">parent_fields_to_update</span> = <span class="b1">[</span><span class="s">'status'</span>, <span class="s">'disposition'</span>, <span class="s">'call_flow_source'</span>, <span class="s">'user_id'</span>, <span class="s">'duration'</span><span class="b1">]</span></div>
<div class="ln" style="top:122px;left:0px">64</div>
<div class="ln" style="top:158px;left:0px">65</div>
<div class="cl" style="top:158px;left:132.3px"><span class="k">async</span> <span class="k">def</span> <span class="f">_handle_base_transcription</span><span class="b1">(</span><span class="v">d</span>, <span class="v">context</span>, <span class="v">new_transcription</span>, <span class="v">configuration</span>, <span class="v">prompt</span>=<span class="k">None</span><span class="b1">)</span>:</div>
<div class="ln" style="top:194px;left:0px">66</div>
<div class="cl" style="top:194px;left:132.3px"><i class="i i1">    </i><span class="s">"""</span></div>
<div class="ln" style="top:230px;left:0px">67</div>
<div class="cl" style="top:230px;left:132.3px"><i class="i i1">    </i><span class="s">Base function to handle transcription updates. This can be extended in the future.</span></div>
<div class="ln" style="top:266px;left:0px">68</div>
<div class="cl" style="top:266px;left:132.3px"><i class="i i1">    </i><span class="s">Currently, it checks for transcription updates and creates a note with the summary.</span></div>
<div class="ln" style="top:302px;left:0px">69</div>
<div class="cl" style="top:302px;left:132.3px"><i class="i i1">    </i><span class="s">"""</span></div>
<div class="ln" style="top:338px;left:0px">70</div>
<div class="cl" style="top:338px;left:132.3px"><i class="i i1">    </i><span class="cm"># Check if transcription was updated</span></div>
<div class="ln" style="top:374px;left:0px">71</div>
<div class="cl" style="top:374px;left:132.3px"><i class="i i1">    </i><span class="v">result</span> = <span class="c">await</span> <span class="f">simple_prompt</span><span class="b1">(</span></div>
<div class="ln" style="top:410px;left:0px">72</div>
<div class="cl" style="top:410px;left:132.3px"><i class="i i1">    </i><i class="i i2">    </i><i class="i i3">    </i><span class="v">content</span>=<span class="v">new_transcription</span>,</div>
<div class="ln" style="top:446px;left:0px">73</div>
<div class="cl" style="top:446px;left:132.3px"><i class="i i1">    </i><i class="i i2">    </i><i class="i i3">    </i><span class="v">system_prompt</span>=<span class="v">prompt</span> <span class="c">or</span> <span class="v">configuration</span>.get<span class="b2">(</span><span class="s">'transcription_base_prompt'</span><span class="b2">)</span>,</div>
<div class="ln" style="top:482px;left:0px">74</div>
<div class="cl" style="top:482px;left:132.3px"><i class="i i1">    </i><i class="i i2">    </i><i class="i i3">    </i><span class="v">current_user</span>=<span class="v">context</span>.user,</div>
<div class="ln" style="top:518px;left:0px">75</div>
<div class="cl" style="top:518px;left:132.3px"><i class="i i1">    </i><i class="i i2">    </i><span class="b1">)</span></div>
<div class="ln" style="top:554px;left:0px">76</div>
<div class="cl" style="top:554px;left:132.3px"><i class="i i1">    </i><span class="v">dt</span> = <span class="ty">datetime</span>.<span class="f">fromisoformat</span><span class="b1">(</span><span class="v">d</span>.get<span class="b2">(</span><span class="s">'created_date'</span><span class="b2">)</span><span class="b1">)</span></div>
<div class="ln" style="top:590px;left:0px">77</div>
<div class="cl" style="top:590px;left:132.3px"><i class="i i1">    </i><span class="v">dt</span> = <span class="v">dt</span>.<span class="f">strftime</span><span class="b1">(</span><span class="s">"%m-</span><span class="k">%d</span><span class="s">-%Y %H:%M:%S"</span><span class="b1">)</span></div>
<div class="ln" style="top:626px;left:0px">78</div>
<div class="cl" style="top:626px;left:132.3px"><i class="i i1">    </i><span class="c">return</span> <span class="b1">{</span></div>
<div class="ln" style="top:662px;left:0px">79</div>
<div class="cl" style="top:662px;left:132.3px"><i class="i i1">    </i><i class="i i2">    </i><span class="s">"name"</span>: <span class="k">f</span><span class="s">"Call Summary - </span><span class="b2">{</span><span class="v">d</span>.get<span class="b3">(</span><span class="s">'name'</span>, <span class="s">'No Name'</span><span class="b3">)</span><span class="b2">}</span><span class="s"> -  </span><span class="b2">{</span><span class="v">dt</span><span class="b2">}</span><span class="s">"</span>,</div>
<div class="ln" style="top:698px;left:0px">80</div>
<div class="cl" style="top:698px;left:132.3px"><i class="i i1">    </i><i class="i i2">    </i><span class="s">"notes"</span>: <span class="v">result</span> + <span class="k">f</span><span class="s">"</span><span class="e">\n\n</span><span class="s">---</span><span class="e">\n\n</span><span class="s">**Original Transcription:**</span><span class="e">\n\n</span><span class="b2">{</span><span class="v">new_transcription</span><span class="b2">}</span><span class="s">"</span>,</div>
<div class="ln" style="top:734px;left:0px">81</div>
<div class="cl" style="top:734px;left:132.3px"><i class="i i1">    </i><i class="i i2">    </i><span class="s">"related_to"</span>: <span class="b2">{</span></div>
<div class="ln" style="top:770px;left:0px">82</div>
<div class="cl" style="top:770px;left:132.3px"><i class="i i1">    </i><i class="i i2">    </i><i class="i i3">    </i><span class="s">"id"</span>: <span class="v">d</span>.get<span class="b3">(</span><span class="s">'contact'</span>, <span class="b1">{}</span><span class="b3">)</span>.get<span class="b3">(</span><span class="s">'id'</span><span class="b3">)</span>,</div>
<div class="ln" style="top:806px;left:0px">83</div>
<div class="cl" style="top:806px;left:132.3px"><i class="i i1">    </i><i class="i i2">    </i><i class="i i3">    </i><span class="s">"name"</span>: <span class="v">d</span>.get<span class="b3">(</span><span class="s">'contact'</span>, <span class="b1">{}</span><span class="b3">)</span>.get<span class="b3">(</span><span class="s">'name'</span><span class="b3">)</span>,</div>
<div class="ln" style="top:842px;left:0px">84</div>
<div class="cl" style="top:842px;left:132.3px"><i class="i i1">    </i><i class="i i2">    </i><i class="i i3">    </i><span class="s">"schema"</span>: <span class="s">"contact"</span>,</div>
<div class="ln" style="top:878px;left:0px">85</div>
<div class="cl" style="top:878px;left:132.3px"><i class="i i1">    </i><i class="i i2">    </i><span class="b2">}</span>,</div>
<div class="ln" style="top:914px;left:0px">86</div>
<div class="cl" style="top:914px;left:132.3px"><i class="i i1">    </i><i class="i i2">    </i><span class="s">"type"</span>: <span class="s">"Follow-up"</span>,</div>
<div class="ln" style="top:950px;left:0px">87</div>
<div class="cl" style="top:950px;left:132.3px"><i class="i i1">    </i><span class="b1">}</span></div>
<div class="ln" style="top:986px;left:0px">88</div>
<div class="ln" style="top:1022px;left:0px">89</div>
<div class="ln" style="top:1058px;left:0px">90</div>
<div class="cl" style="top:1058px;left:132.3px"><span class="k">async</span> <span class="k">def</span> <span class="f">_handle_task_generation_from_transcription</span><span class="b1">(</span><span class="v">d</span>, <span class="v">context</span>, <span class="v">new_transcription</span>, <span class="v">configuration</span><span class="b1">)</span>:</div>
<div class="ln" style="top:1094px;left:0px">91</div>
<div class="cl" style="top:1094px;left:132.3px"><i class="i i1">    </i><span class="s">"""</span></div>
<div class="ln" style="top:1130px;left:0px">92</div>
<div class="cl" style="top:1130px;left:132.3px"><i class="i i1">    </i><span class="s">Handles generating tasks from transcription updates using AI.</span></div>
<div class="ln" style="top:1166px;left:0px">93</div>
<div class="cl" style="top:1166px;left:132.3px"><i class="i i1">    </i><span class="s">If the configuration has 'generate_tasks_from_transcription' enabled, it will</span></div>
<div class="ln" style="top:1202px;left:0px">94</div>
<div class="cl" style="top:1202px;left:132.3px"><i class="i i1">    </i><span class="s">"""</span></div>
<div class="ln" style="top:1238px;left:0px">95</div>
<div class="cl" style="top:1238px;left:132.3px"><i class="i i1">    </i><span class="v">result</span> = <span class="c">await</span> <span class="f">simple_prompt</span><span class="b1">(</span></div>
<div class="ln" style="top:1274px;left:0px">96</div>
<div class="cl" style="top:1274px;left:132.3px"><i class="i i1">    </i><i class="i i2">    </i><i class="i i3">    </i><span class="v">content</span>=<span class="v">new_transcription</span>,</div>
<div class="ln" style="top:1310px;left:0px">97</div>
<div class="cl" style="top:1310px;left:132.3px"><i class="i i1">    </i><i class="i i2">    </i><i class="i i3">    </i><span class="v">system_prompt</span>=<span class="v">configuration</span>.get<span class="b2">(</span><span class="s">'transcription_task_generation_prompt'</span><span class="b2">)</span>,</div>
<div class="a" style="left:1178px;top:0;width:2px;height:1343px;background:#2b2b2b"></div>
<div class="a" style="left:1197px;top:26px;width:9px;height:11px;background:#cca700"></div>
<div class="a" style="left:1180px;top:81px;width:26px;height:4px;background:#a0a0a0"></div>
<div class="a" style="left:0;top:0;width:1206px;height:9px;background:linear-gradient(rgba(0,0,0,.6),rgba(0,0,0,0))"></div>
</div>
<div class="a" style="left:1818px;top:185px;width:1206px;height:1343px;overflow:hidden">
<div class="a" style="left:130px;top:0;width:1076px;height:36px;box-sizing:border-box;border:2px solid #2a2a2a"></div>
<div class="ln" style="top:0px;left:-2.3px;color:#cccccc">1</div>
<div class="cl" style="top:0px;left:129.9px"><span class="c">from</span> <span class="ty">valstorm</span>.<span class="ty">models</span> <span class="c">import</span> <span class="ty">User</span></div>
<div class="ln" style="top:36px;left:-2.3px">2</div>
<div class="cl" style="top:36px;left:129.9px"><span class="c">from</span> <span class="ty">valstorm</span>.<span class="ty">record</span> <span class="c">import</span> <span class="f">create_records</span></div>
<div class="ln" style="top:72px;left:-2.3px">3</div>
<div class="cl" style="top:72px;left:129.9px"><span class="c">from</span> <span class="ty">valstorm</span>.<span class="ty">dependencies</span> <span class="c">import</span> <span class="f">add_log</span></div>
<div class="ln" style="top:108px;left:-2.3px">4</div>
<div class="ln" style="top:144px;left:-2.3px">5</div>
<div class="cl" style="top:144px;left:129.9px"><span class="k">def</span> <span class="f">_task_generator</span><span class="b1">(</span><span class="v">current_user</span>: <span class="ty">User</span>, <span class="v">target_record</span>: <span class="ty">dict</span>, <span class="v">step_number</span>: <span class="ty">int</span>, <span class="v">drip_name</span>: <span class="ty">str</span><span class="b1">)</span>:</div>
<div class="ln" style="top:180px;left:-2.3px">6</div>
<div class="cl" style="top:180px;left:129.9px"><i class="i i1">    </i><span class="v">task_subject</span> = <span class="k">f</span><span class="s">"</span><span class="b1">{</span><span class="v">drip_name</span><span class="b1">}</span><span class="s"> - Step </span><span class="b1">{</span><span class="v">step_number</span><span class="b1">}</span><span class="s">: </span><span class="b1">{</span><span class="v">action</span><span class="b1">}</span><span class="s"> </span><span class="b1">{</span><span class="v">target_record</span><span class="b1">}</span><span class="s">"</span></div>
<div class="ln" style="top:216px;left:-2.3px">7</div>
<div class="cl" style="top:216px;left:129.9px"><i class="i i1">    </i><span class="c">return</span> <span class="b1">{</span></div>
<div class="ln" style="top:252px;left:-2.3px">8</div>
<div class="cl" style="top:252px;left:129.9px"><i class="i i1">    </i><i class="i i2">    </i><i class="i i3">    </i><span class="s">"name"</span>: <span class="v">task_subject</span>,</div>
<div class="ln" style="top:288px;left:-2.3px">9</div>
<div class="cl" style="top:288px;left:129.9px"><i class="i i1">    </i><i class="i i2">    </i><i class="i i3">    </i><span class="s">"status"</span>: <span class="s">"Not Started"</span>,</div>
<div class="ln" style="top:324px;left:-2.3px">10</div>
<div class="cl" style="top:324px;left:129.9px"><i class="i i1">    </i><i class="i i2">    </i><i class="i i3">    </i><span class="s">"priority"</span>: <span class="s">"High"</span>,</div>
<div class="ln" style="top:360px;left:-2.3px">11</div>
<div class="cl" style="top:360px;left:129.9px"><i class="i i1">    </i><i class="i i2">    </i><i class="i i3">    </i><span class="s">"due_date_time"</span>: <span class="k">None</span>,</div>
<div class="ln" style="top:396px;left:-2.3px">12</div>
<div class="cl" style="top:396px;left:129.9px"><i class="i i1">    </i><i class="i i2">    </i><i class="i i3">    </i><span class="s">"description"</span>: <span class="k">f</span><span class="s">"Auto-generated by Drip System (Step </span><span class="b2">{</span><span class="v">step_number</span><span class="b2">}</span><span class="s">)"</span>,</div>
<div class="ln" style="top:432px;left:-2.3px">13</div>
<div class="cl" style="top:432px;left:129.9px"><i class="i i1">    </i><i class="i i2">    </i><i class="i i3">    </i><span class="s">"owner"</span>: <span class="v">current_user</span>.<span class="v">id</span>,</div>
<div class="ln" style="top:468px;left:-2.3px">14</div>
<div class="cl" style="top:468px;left:129.9px"><i class="i i1">    </i><i class="i i2">    </i><i class="i i3">    </i><span class="s">"related_to"</span>: <span class="v">target_record</span>,</div>
<div class="ln" style="top:504px;left:-2.3px">15</div>
<div class="cl" style="top:504px;left:129.9px"><i class="i i1">    </i><i class="i i2">    </i><i class="i i3">    </i><span class="s">"type"</span>: <span class="v">action</span></div>
<div class="ln" style="top:540px;left:-2.3px">16</div>
<div class="cl" style="top:540px;left:129.9px"><i class="i i1">    </i><i class="i i2">    </i><span class="b1">}</span></div>
<div class="ln" style="top:576px;left:-2.3px">17</div>
<div class="ln" style="top:612px;left:-2.3px">18</div>
<div class="cl" style="top:612px;left:129.9px"><span class="k">async</span> <span class="k">def</span> <span class="f">execute</span><span class="b1">(</span><span class="v">current_user</span>: <span class="ty">User</span>, **<span class="v">kwargs</span><span class="b1">)</span>:</div>
<div class="ln" style="top:648px;left:-2.3px">19</div>
<div class="cl" style="top:648px;left:129.9px"><i class="i i1">    </i><span class="s">"""</span></div>
<div class="ln" style="top:684px;left:-2.3px">20</div>
<div class="cl" style="top:684px;left:129.9px"><i class="i i1">    </i><span class="s">Test Function: Creates a 'Call' task on the target record.</span></div>
<div class="ln" style="top:720px;left:-2.3px">21</div>
<div class="cl" style="top:720px;left:129.9px"><i class="i i1">    </i><span class="s">"""</span></div>
<div class="ln" style="top:756px;left:-2.3px">22</div>
<div class="cl" style="top:756px;left:129.9px"><i class="i i1">    </i><span class="c">try</span>:</div>
<div class="ln" style="top:792px;left:-2.3px">23</div>
<div class="cl" style="top:792px;left:129.9px"><i class="i i1">    </i><i class="i i2">    </i><span class="v">target_record</span> = <span class="v">kwargs</span>.<span class="f">get</span><span class="b1">(</span><span class="s">'target_record'</span><span class="b1">)</span></div>
<div class="ln" style="top:828px;left:-2.3px">24</div>
<div class="cl" style="top:828px;left:129.9px"><i class="i i1">    </i><i class="i i2">    </i><span class="f">add_log</span><span class="b1">(</span><span class="k">f</span><span class="s">"target_record: </span><span class="b2">{</span><span class="v">target_record</span><span class="b2">}</span><span class="s">"</span>, <span class="s">"debug"</span><span class="b1">)</span></div>
<div class="ln" style="top:864px;left:-2.3px">25</div>
<div class="cl" style="top:864px;left:129.9px"><i class="i i1">    </i><i class="i i2">    </i><span class="v">step_number</span> = <span class="v">kwargs</span>.<span class="f">get</span><span class="b1">(</span><span class="s">'step_number'</span><span class="b1">)</span></div>
<div class="ln" style="top:900px;left:-2.3px">26</div>
<div class="cl" style="top:900px;left:129.9px"><i class="i i1">    </i><i class="i i2">    </i><span class="v">drip_name</span> = <span class="v">kwargs</span>.<span class="f">get</span><span class="b1">(</span><span class="s">'drip_name'</span>, <span class="s">'Drip'</span><span class="b1">)</span></div>
<div class="ln" style="top:936px;left:-2.3px">27</div>
<div class="cl" style="top:936px;left:129.9px"><i class="i g">    </i><i class="i g">    </i></div>
<div class="ln" style="top:972px;left:-2.3px">28</div>
<div class="cl" style="top:972px;left:129.9px"><i class="i i1">    </i><i class="i i2">    </i><span class="c">if</span> <span class="k">not</span> <span class="v">target_record</span>:</div>
<div class="ln" style="top:1008px;left:-2.3px">29</div>
<div class="cl" style="top:1008px;left:129.9px"><i class="i i1">    </i><i class="i i2">    </i><i class="i i3">    </i><span class="c">return</span></div>
<div class="ln" style="top:1044px;left:-2.3px">30</div>
<div class="cl" style="top:1044px;left:129.9px"><i class="i g">    </i><i class="i g">    </i></div>
<div class="ln" style="top:1080px;left:-2.3px">31</div>
<div class="cl" style="top:1080px;left:129.9px"><i class="i i1">    </i><i class="i i2">    </i></div>
<div class="ln" style="top:1116px;left:-2.3px">32</div>
<div class="cl" style="top:1116px;left:129.9px"><i class="i i1">    </i><i class="i i2">    </i><span class="c">if</span> <span class="v">step_number</span> == <span class="n">1</span>:</div>
<div class="ln" style="top:1152px;left:-2.3px">33</div>
<div class="cl" style="top:1152px;left:129.9px"><i class="i i1">    </i><i class="i i2">    </i><i class="i i3">    </i><span class="v">task_payload</span> = <span class="f">_task_generator</span><span class="b1">(</span><span class="v">current_user</span>, <span class="v">target_record</span>, <span class="v">step_number</span>, <span class="v">drip_name</span><span class="b1">)</span></div>
<div class="ln" style="top:1188px;left:-2.3px">34</div>
<div class="cl" style="top:1188px;left:129.9px"><i class="i i1">    </i><i class="i i2">    </i><span class="c">elif</span> <span class="v">step_number</span> == <span class="n">2</span>:</div>
<div class="ln" style="top:1224px;left:-2.3px">35</div>
<div class="cl" style="top:1224px;left:129.9px"><i class="i i1">    </i><i class="i i2">    </i><i class="i i3">    </i><span class="v">task_payload</span> = <span class="f">_task_generator</span><span class="b1">(</span><span class="v">current_user</span>, <span class="v">target_record</span>, <span class="v">step_number</span>, <span class="v">drip_name</span><span class="b1">)</span></div>
<div class="ln" style="top:1260px;left:-2.3px">36</div>
<div class="cl" style="top:1260px;left:129.9px"><i class="i i1">    </i><i class="i i2">    </i><span class="c">else</span>:</div>
<div class="ln" style="top:1296px;left:-2.3px">37</div>
<div class="cl" style="top:1296px;left:129.9px"><i class="i i1">    </i><i class="i i2">    </i><i class="i i3">    </i><span class="v">task_payload</span> = <span class="f">_task_generator</span><span class="b1">(</span><span class="v">current_user</span>, <span class="v">target_record</span>, <span class="v">step_number</span>, <span class="v">drip_name</span><span class="b1">)</span></div>
<div class="ln" style="top:1332px;left:-2.3px">38</div>
<div class="a" style="left:1178px;top:0;width:28px;height:630px;background:rgba(121,121,121,.4)"></div>
<div class="a" style="left:131px;top:1317px;width:638px;height:24px;background:rgba(121,121,121,.4)"></div>
</div>
<svg class="a" style="left:1818.75px;top:186.75px;width:29.5px;height:29.5px;color:#ffcc00;" viewBox="0 0 16 16" fill="none" stroke="currentColor" stroke-width="1.15" stroke-linecap="round" stroke-linejoin="round"><path d="M8 1.5a4.5 4.5 0 0 0-2.8 8c.5.5.8 1 .8 1.7V12h4v-.8c0-.7.3-1.2.8-1.7a4.5 4.5 0 0 0-2.8-8zM6 12v1.2a1.3 1.3 0 0 0 1.3 1.3h1.4a1.3 1.3 0 0 0 1.3-1.3V12"/></svg>
<div class="a" style="left:610px;top:1528px;width:2414px;height:2px;background:#2b2b2b;"></div>
<span class="a t" style="top:1547.8px;line-height:32px;font-size:22px;color:#9d9d9d;letter-spacing:-0.2px;left:649.29px;">PROBLEMS</span>
<div class="a" style="left:778px;top:1547.5px;width:45px;height:32px;background:#0078d4;border-radius:16px;"></div>
<span class="a t" style="top:1547.8px;line-height:32px;font-size:22px;color:#fff;left:778px;width:45px;text-align:center;text-shadow:0 0 .5px #fff;">33</span>
<span class="a t" style="top:1547.8px;line-height:32px;font-size:22px;color:#9d9d9d;letter-spacing:0.49px;left:865.79px;">OUTPUT</span>
<span class="a t" style="top:1547.8px;line-height:32px;font-size:22px;color:#9d9d9d;letter-spacing:-0.09px;left:1006.49px;">DEBUG CONSOLE</span>
<span class="a t" style="top:1547.8px;line-height:32px;font-size:22px;color:#e0e0e0;letter-spacing:0.06px;left:1244.49px;">TERMINAL</span>
<div class="a" style="left:1241px;top:1583px;width:119px;height:2px;background:#0078d4;"></div>
<span class="a t" style="top:1547.8px;line-height:32px;font-size:22px;color:#9d9d9d;letter-spacing:-0.14px;left:1403.49px;">PORTS</span>
<svg class="a" style="left:2408px;top:1548.2px;width:32px;height:32px;color:#cccccc;" viewBox="0 0 16 16" fill="none" stroke="currentColor" stroke-width="1" stroke-linecap="round" stroke-linejoin="round"><rect x="1.5" y="1.7" width="13" height="12.6" rx="2.2"/><path d="M4.2 5.6 6.8 8l-2.6 2.4M8 10.6h3.6"/></svg>
<span class="a t" style="top:1548.1px;line-height:34px;font-size:24px;color:#cccccc;letter-spacing:0.02px;left:2447.18px;">node - monorepo</span>
<svg class="a" style="left:2649px;top:1548px;width:32px;height:32px;color:#cccccc;" viewBox="0 0 16 16" fill="none" stroke="currentColor" stroke-width="1" stroke-linecap="round" stroke-linejoin="round"><path d="M8 2.2v11.6M2.2 8h11.6"/></svg>
<svg class="a" style="left:2686px;top:1552.5px;width:23px;height:23px;color:#cccccc;" viewBox="0 0 16 16" fill="none" stroke="currentColor" stroke-width="1.1" stroke-linecap="round" stroke-linejoin="round"><path d="M3.2 6 8 10.8 12.8 6"/></svg>
<svg class="a" style="left:2728px;top:1548px;width:32px;height:32px;color:#cccccc;" viewBox="0 0 16 16" fill="none" stroke="currentColor" stroke-width="1" stroke-linecap="round" stroke-linejoin="round"><rect x="1.5" y="1.5" width="13" height="13" rx="2.2"/><path d="M8 1.5v13"/></svg>
<svg class="a" style="left:2778px;top:1545.5px;width:36px;height:36px;color:#cccccc;" viewBox="0 0 16 16" fill="none" stroke="currentColor" stroke-width="1" stroke-linecap="round" stroke-linejoin="round"><path d="M2.5 4h11M6 4V2.8a.8.8 0 0 1 .8-.8h2.4a.8.8 0 0 1 .8.8V4M3.8 4l.7 8.6a1.5 1.5 0 0 0 1.5 1.4h4a1.5 1.5 0 0 0 1.5-1.4l.7-8.6M6.6 6.5v5M9.4 6.5v5"/></svg>
<svg class="a" style="left:2833.5px;top:1550px;width:28px;height:28px;color:#cccccc;" viewBox="0 0 16 16" fill="none" stroke="currentColor" stroke-width="1" stroke-linecap="round" stroke-linejoin="round"><g fill="currentColor" stroke="none"><circle cx="3.95" cy="8" r="1.05"/><circle cx="8" cy="8" r="1.05"/><circle cx="12.05" cy="8" r="1.05"/></g></svg>
<div class="a" style="left:2886px;top:1548.5px;width:2px;height:32px;background:#5a5a5a;"></div>
<svg class="a" style="left:2910px;top:1548px;width:32px;height:32px;color:#cccccc;" viewBox="0 0 16 16" fill="none" stroke="currentColor" stroke-width="1" stroke-linecap="round" stroke-linejoin="round"><path d="M2.5 6V4a1.5 1.5 0 0 1 1.5-1.5h2M10 2.5h2A1.5 1.5 0 0 1 13.5 4v2M13.5 10v2a1.5 1.5 0 0 1-1.5 1.5h-2M6 13.5H4A1.5 1.5 0 0 1 2.5 12v-2"/></svg>
<svg class="a" style="left:2962px;top:1548px;width:32px;height:32px;color:#cccccc;" viewBox="0 0 16 16" fill="none" stroke="currentColor" stroke-width="1" stroke-linecap="round" stroke-linejoin="round"><path d="M3.6 3.6l8.8 8.8M12.4 3.6l-8.8 8.8"/></svg>
<div class="tl" style="top:1599.5px;left:650.4px">jared@Jareds-MacBook-Pro monorepo % yarn dev</div>
<div class="a" style="left:616px;top:1629px;width:2376px;height:2px;background:#0d0d0d;"></div>
<div class="a" style="left:616px;top:1631px;width:2376px;height:5px;background:linear-gradient(rgba(0,0,0,.35),rgba(0,0,0,0));"></div>
<div class="tl" style="top:1631.2px;left:650.4px"><span style="color:#23d18b;font-weight:bold">✓</span> Compiled in 20ms</div>
<div class="tl" style="top:1659.27px;left:650.4px"><span style="color:#e8c50a">⚠</span> Fast Refresh had to perform a full reload due to a runtime error.</div>
<div class="tl" style="top:1687.34px;left:650.4px"><span style="color:#23d18b;font-weight:bold">✓</span> Compiled in 17ms</div>
<div class="tl" style="top:1715.41px;left:650.4px"> GET / <span style="color:#16c072">200</span> in 83ms <span style="color:#7a7a7a">(compile: 19ms, render: 64ms)</span></div>
<div class="tl" style="top:1743.48px;left:650.4px"><span style="color:#23d18b;font-weight:bold">✓</span> Compiled in 17ms</div>
<div class="tl" style="top:1771.55px;left:650.4px"><span style="color:#23d18b;font-weight:bold">✓</span> Compiled in 18ms</div>
<div class="tl" style="top:1799.62px;left:650.4px"><span style="color:#23d18b;font-weight:bold">✓</span> Compiled in 15ms</div>
<div class="a" style="left:650.4px;top:1827.5px;width:13.5px;height:27.5px;background:#cccccc;"></div>
<div class="a" style="left:2997px;top:1603.5px;width:9px;height:6px;background:#4f4f4f;"></div>
<div class="a" style="left:2995px;top:1600px;width:2px;height:256px;background:#252525;"></div>
<div class="a" style="left:0px;top:1855px;width:3024px;height:2px;background:#2b2b2b;"></div>
<svg class="a" style="left:16px;top:1861.9px;width:32px;height:32px;color:#cccccc;" viewBox="0 0 16 16" fill="none" stroke="currentColor" stroke-width="1.1" stroke-linecap="round" stroke-linejoin="round"><path d="M3.1 4.8 7.6 8.9 3.1 13.3M13 .8 8.8 5.1 13 9.3"/></svg>
<svg class="a" style="left:80.5px;top:1861.6px;width:32px;height:32px;color:#cccccc;" viewBox="0 0 16 16" fill="none" stroke="currentColor" stroke-width="1" stroke-linecap="round" stroke-linejoin="round"><path d="M3.3 12.6V3.2a2 2 0 0 1 2-2h6a1 1 0 0 1 1 1v9.9H5a1.7 1.7 0 0 0-1.7 1.7c0 .9.6 1.6 1.5 1.7M8.3 14.2h4"/><path d="M5.1 13.1h2.7v2.5l-1.35-.9-1.35.9z" fill="currentColor" stroke="none"/></svg>
<span class="a t" style="top:1860.7px;line-height:34px;font-size:24px;color:#cccccc;letter-spacing:1.03px;left:118.18px;">api</span>
<svg class="a" style="left:164px;top:1861.9px;width:32px;height:32px;color:#cccccc;" viewBox="0 0 16 16" fill="none" stroke="currentColor" stroke-width="1" stroke-linecap="round" stroke-linejoin="round"><circle cx="4.7" cy="2.1" r="1.9"/><circle cx="11.8" cy="5" r="1.9"/><circle cx="4.7" cy="13" r="1.9"/><path d="M4.7 4v7.1M11.8 6.9c0 1.6-1 2-2.4 2H4.7"/></svg>
<span class="a t" style="top:1860.7px;line-height:34px;font-size:24px;color:#cccccc;letter-spacing:0.9px;left:202.68px;">main</span>
<svg class="a" style="left:269.5px;top:1862.2px;width:32px;height:32px;color:#cccccc;" viewBox="0 0 16 16" fill="none" stroke="currentColor" stroke-width="1" stroke-linecap="round" stroke-linejoin="round"><path d="M3.2 10.8A5.6 5.6 0 0 1 8.6 2.4M6.9.5l2 1.9-2 2M12.8 5.2A5.6 5.6 0 0 1 7.4 13.6M9.1 15.5l-2-1.9 2-2"/></svg>
<svg class="a" style="left:333.3px;top:1861px;width:32px;height:32px;color:#cccccc;" viewBox="0 0 16 16" fill="none" stroke="currentColor" stroke-width="1" stroke-linecap="round" stroke-linejoin="round"><circle cx="8" cy="8" r="6.3"/><path d="M5.7 5.7l4.6 4.6M10.3 5.7l-4.6 4.6"/></svg>
<span class="a t" style="top:1860.7px;line-height:34px;font-size:24px;color:#cccccc;left:371.68px;">9</span>
<svg class="a" style="left:394px;top:1860.6px;width:32px;height:32px;color:#cccccc;" viewBox="0 0 16 16" fill="none" stroke="currentColor" stroke-width="1" stroke-linecap="round" stroke-linejoin="round"><path d="M7.1 2.5a1 1 0 0 1 1.8 0l5.3 9.8a1 1 0 0 1-.9 1.5H2.7a1 1 0 0 1-.9-1.5z"/><path d="M8 6v4M8 11.7v.2"/></svg>
<span class="a t" style="top:1860.7px;line-height:34px;font-size:24px;color:#cccccc;letter-spacing:1.72px;left:433.18px;">24</span>
<span class="a t" style="top:1860.7px;line-height:34px;font-size:24px;color:#cccccc;letter-spacing:0.99px;left:1925.68px;">Ln 15, Col 15</span>
<span class="a t" style="top:1860.7px;line-height:34px;font-size:24px;color:#cccccc;letter-spacing:0.74px;left:2111.38px;">Spaces: 4</span>
<span class="a t" style="top:1860.7px;line-height:34px;font-size:24px;color:#cccccc;letter-spacing:1.53px;left:2254.68px;">UTF-8</span>
<span class="a t" style="top:1860.7px;line-height:34px;font-size:24px;color:#cccccc;letter-spacing:1.06px;left:2360.18px;">LF</span>
<span class="a t" style="top:1859.8px;line-height:34px;font-size:24px;color:#cccccc;letter-spacing:1.98px;left:2422.68px;">{ }</span>
<span class="a t" style="top:1860.7px;line-height:34px;font-size:24px;color:#cccccc;letter-spacing:1.15px;left:2463.68px;">Python</span>
<svg class="a" style="left:2575.5px;top:1860px;width:34px;height:34px;color:#cccccc;" viewBox="0 0 16 16" fill="none" stroke="currentColor" stroke-width="1.2" stroke-linecap="round" stroke-linejoin="round"><path fill="currentColor" stroke="none" d="M.6 9.4c0-1.7 1.1-2.7 2.4-3.1h10c1.3.4 2.4 1.4 2.4 3.1v1.6c0 .8-.4 1.4-1.1 1.8-1.7 1.1-3.8 1.8-6.3 1.8s-4.6-.7-6.3-1.8c-.7-.4-1.1-1-1.1-1.8z"/><rect x="2.9" y="1.9" width="5.1" height="5.6" rx="2.2" fill="#181818"/><rect x="8" y="1.9" width="5.1" height="5.6" rx="2.2" fill="#181818"/><path stroke="#181818" stroke-width="1.2" d="M6 9.3v2.6M10 9.3v2.6"/></svg>
<span class="a t" style="top:1860.7px;line-height:34px;font-size:24px;color:#cccccc;letter-spacing:1.3px;left:2639.48px;">api (3.11.14)</span>
<svg class="a" style="left:2821px;top:1861px;width:32px;height:32px;color:#cccccc;" viewBox="0 0 16 16" fill="none" stroke="currentColor" stroke-width="1" stroke-linecap="round" stroke-linejoin="round"><circle cx="8" cy="8" r="6.3"/><path d="M3.6 12.4l8.8-8.8"/></svg>
<span class="a t" style="top:1860.7px;line-height:34px;font-size:24px;color:#cccccc;letter-spacing:1.03px;left:2858.68px;">Prettier</span>
<svg class="a" style="left:2977px;top:1861px;width:32px;height:32px;color:#cccccc;" viewBox="0 0 16 16" fill="none" stroke="currentColor" stroke-width="1" stroke-linecap="round" stroke-linejoin="round"><path d="M8 2a4 4 0 0 0-4 4v2.8L2.7 11.5h10.6L12 8.8V6a4 4 0 0 0-.3-1.5M6.5 11.7a1.5 1.5 0 0 0 3 0"/><circle cx="11.7" cy="3.2" r="2.9" fill="currentColor" stroke="none"/></svg>
</div>
<div class="rim"></div>
</body></html>
